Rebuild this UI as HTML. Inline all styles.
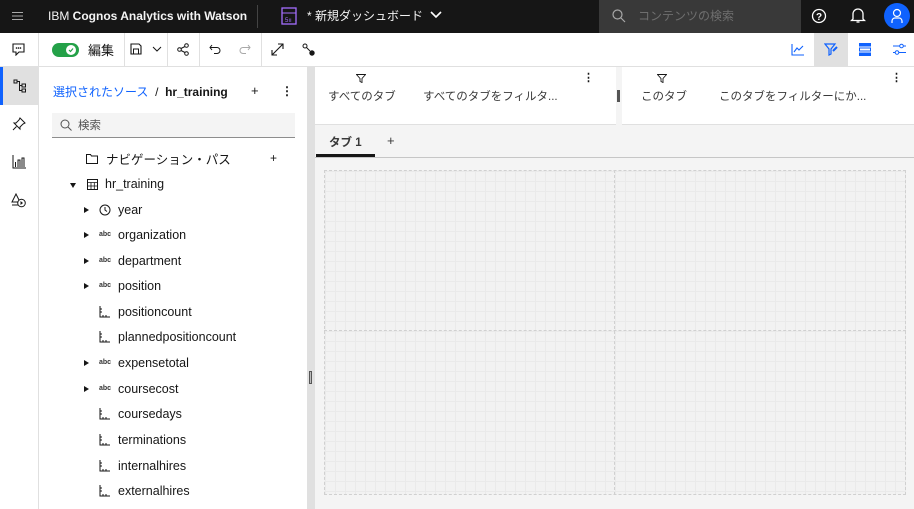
<!DOCTYPE html>
<html><head><meta charset="utf-8"><style>
*{box-sizing:border-box;margin:0;padding:0}
body{width:914px;height:509px;overflow:hidden;font-family:"Liberation Sans","Noto Sans CJK JP",sans-serif;background:#fff;position:relative;color:#161616}
.abs{position:absolute}
.top{left:0;top:0;width:914px;height:33px;background:#161616}
.tb{left:0;top:33px;width:914px;height:34px;background:#fff;border-bottom:1px solid #e0e0e0}
.sep{position:absolute;top:0;width:1px;height:33px;background:#e0e0e0}
.rail{left:0;top:67px;width:39px;height:442px;border-right:1px solid #e0e0e0;background:#fff}
.panel{left:39px;top:67px;width:268px;height:442px;background:#fff}
.split{left:307px;top:67px;width:8px;height:442px;background:#e0e0e0}
.main{left:315px;top:67px;width:599px;height:442px;background:#f4f4f4}
.item{position:absolute;font-size:12.5px;color:#161616}
.tri{position:absolute;width:0;height:0;border-top:3.5px solid transparent;border-bottom:3.5px solid transparent;border-left:5px solid #161616}
.abc{position:absolute;font-size:7px;font-weight:bold;color:#333}
</style></head><body>
<div class="abs top">
 <div class="abs" style="left:12px;top:12px;width:11px;height:1.3px;background:#aaa;box-shadow:0 3.5px 0 #aaa,0 7px 0 #aaa"></div>
 <div class="abs" style="left:48px;top:9px;color:#f4f4f4;font-size:12px">IBM <b>Cognos Analytics with Watson</b></div>
 <div class="abs" style="left:257px;top:5px;width:1px;height:23px;background:#444"></div>
 <svg class="abs" style="left:281px;top:7px" width="16" height="18"><rect x="1" y="1" width="14" height="16" fill="none" stroke="#a56eff" stroke-width="1.3"/><line x1="1" y1="6" x2="15" y2="6" stroke="#a56eff"/><text x="4" y="15" font-size="6" fill="#a56eff">5ıı</text></svg>
 <div class="abs" style="left:307px;top:7px;color:#f4f4f4;font-size:12px">* 新規ダッシュボード</div>
 <svg class="abs" style="left:430px;top:11px" width="12" height="8"><path d="M1 1l5 5 5-5" fill="none" stroke="#fff" stroke-width="1.6"/></svg>
 <div class="abs" style="left:599px;top:0;width:202px;height:33px;background:#393939"></div>
 <svg class="abs" style="left:612px;top:9px" width="14" height="14"><circle cx="5.5" cy="5.5" r="4.5" fill="none" stroke="#a8a8a8" stroke-width="1.2"/><path d="M9 9l4 4" stroke="#a8a8a8" stroke-width="1.2"/></svg>
 <div class="abs" style="left:638px;top:7px;color:#6f6f6f;font-size:12px">コンテンツの検索</div>
 <svg class="abs" style="left:811px;top:8px" width="16" height="16"><circle cx="8" cy="8" r="6.5" fill="none" stroke="#fff" stroke-width="1.3"/><text x="5" y="12" font-size="10" fill="#fff" font-weight="bold">?</text></svg>
 <svg class="abs" style="left:850px;top:7px" width="16" height="17"><path d="M3 12V7a5 5 0 0110 0v5l1.5 1.5h-13z" fill="none" stroke="#fff" stroke-width="1.3"/><path d="M6.5 15h3" stroke="#fff" stroke-width="1.3"/></svg>
 <div class="abs" style="left:884px;top:3px;width:26px;height:26px;border-radius:50%;background:#0f62fe"></div>
 <svg class="abs" style="left:890px;top:8px" width="14" height="16"><circle cx="7" cy="5" r="3.5" fill="none" stroke="#fff" stroke-width="1.2"/><path d="M2 15v-2a3 3 0 013-3h4a3 3 0 013 3v2" fill="none" stroke="#fff" stroke-width="1.2"/></svg>
</div>
<div class="abs tb">
 <div class="sep" style="left:38px"></div><div class="sep" style="left:124px"></div><div class="sep" style="left:167px"></div><div class="sep" style="left:199px"></div><div class="sep" style="left:261px"></div>
 <svg class="abs" style="left:12px;top:10px" width="14" height="13"><path d="M1 1h11v8H7l-3 3V9H1z" fill="none" stroke="#161616" stroke-width="1.1"/><circle cx="4.5" cy="5" r=".8"/><circle cx="6.5" cy="5" r=".8"/><circle cx="8.5" cy="5" r=".8"/></svg>
 <div class="abs" style="left:52px;top:10px;width:27px;height:14px;border-radius:7px;background:#24a148"></div>
 <div class="abs" style="left:66px;top:12px;width:10px;height:10px;border-radius:50%;background:#fff"></div>
 <svg class="abs" style="left:68px;top:14px" width="6" height="6"><path d="M1 3l1.5 1.5L5 1.5" fill="none" stroke="#24a148" stroke-width="1.2"/></svg>
 <div class="abs" style="left:88px;top:7px;font-size:13px">編集</div>
 <svg class="abs" style="left:130px;top:10px" width="12" height="12"><path d="M1 1h8l2 2v8H1z" fill="none" stroke="#161616" stroke-width="1.1"/><rect x="3.5" y="6" width="5" height="5" fill="none" stroke="#161616"/></svg>
 <svg class="abs" style="left:152px;top:13px" width="10" height="6"><path d="M1 1l4 4 4-4" fill="none" stroke="#161616"/></svg>
 <svg class="abs" style="left:177px;top:10px" width="12" height="13"><circle cx="2.5" cy="6.5" r="1.8" fill="none" stroke="#161616"/><circle cx="9.5" cy="2.5" r="1.8" fill="none" stroke="#161616"/><circle cx="9.5" cy="10.5" r="1.8" fill="none" stroke="#161616"/><path d="M4 5.5l4-2M4 7.5l4 2" stroke="#161616"/></svg>
 <svg class="abs" style="left:209px;top:11px" width="12" height="10"><path d="M3 1L1 3.5 3 6M1 3.5h7a3 3 0 010 6H5" fill="none" stroke="#161616"/></svg>
 <svg class="abs" style="left:239px;top:11px" width="12" height="10"><path d="M9 1l2 2.5L9 6M11 3.5H4a3 3 0 000 6h3" fill="none" stroke="#a8a8a8"/></svg>
 <svg class="abs" style="left:271px;top:10px" width="13" height="13"><path d="M1 12L12 1M7 1h5v5M1 7v5h5" fill="none" stroke="#161616" stroke-width="1.1"/></svg>
 <svg class="abs" style="left:302px;top:10px" width="13" height="13"><circle cx="3" cy="3" r="2" fill="none" stroke="#161616"/><circle cx="10" cy="10" r="2.7" fill="#161616"/><path d="M4.5 4.5l3.5 3.5" stroke="#161616"/></svg>
 <svg class="abs" style="left:791px;top:11px" width="13" height="12"><path d="M1 0v11h12M3 8l3-4 2 2 4-4" fill="none" stroke="#0f62fe" stroke-width="1.1"/></svg>
 <div class="abs" style="left:814px;top:0;width:34px;height:33px;background:#e0e0e0"></div>
 <svg class="abs" style="left:824px;top:10px" width="14" height="13"><path d="M1 1h10L7 6v5l-2 1V6z" fill="none" stroke="#0f62fe" stroke-width="1.2"/><path d="M9 8l4-4" stroke="#0f62fe" stroke-width="2"/></svg>
 <svg class="abs" style="left:859px;top:10px" width="12" height="13"><rect x="0" y="0" width="12" height="3.5" fill="#0f62fe"/><rect x="0.5" y="5" width="11" height="3" fill="none" stroke="#0f62fe"/><rect x="0" y="9.5" width="12" height="3.5" fill="#0f62fe"/></svg>
 <svg class="abs" style="left:893px;top:10px" width="13" height="13"><path d="M0 3h13M0 9.5h13" stroke="#0f62fe"/><circle cx="8.5" cy="3" r="1.8" fill="#fff" stroke="#0f62fe"/><circle cx="4" cy="9.5" r="1.8" fill="#fff" stroke="#0f62fe"/></svg>
</div>
<div class="abs rail">
 <div class="abs" style="left:0;top:0;width:38px;height:38px;background:#e0e0e0;border-left:3px solid #0f62fe"></div>
 <svg class="abs" style="left:13px;top:12px" width="14" height="14"><rect x="1" y="1" width="3" height="3" fill="none" stroke="#161616"/><rect x="9" y="5" width="3.5" height="3" fill="none" stroke="#161616"/><rect x="9" y="10" width="3.5" height="3" fill="none" stroke="#161616"/><path d="M4 2.5h2.5v9H9M6.5 6.5H9" fill="none" stroke="#161616"/></svg>
 <svg class="abs" style="left:12px;top:50px" width="14" height="14"><path d="M8 1l5 5-2 1-3 3 0 2-6-6 2 0 3-3z M4.5 9.5L1 13" fill="none" stroke="#161616"/></svg>
 <svg class="abs" style="left:12px;top:88px" width="14" height="14"><path d="M1 0v13h13M3.5 12V7M6 12V5h2v7M10 12V3h2v9" fill="none" stroke="#161616"/></svg>
 <svg class="abs" style="left:11px;top:126px" width="16" height="15"><path d="M5 1L1 9h8zM1 12h7" fill="none" stroke="#161616"/><circle cx="10.5" cy="10" r="3.8" fill="#fff" stroke="#161616"/><path d="M9.5 8l2.5 2-2.5 2z" fill="#161616"/></svg>
</div>
<div class="abs panel">
 <div class="abs" style="left:14px;top:16px;font-size:12px;color:#0f62fe">選択されたソース <span style="color:#161616">&nbsp;/&nbsp; <b>hr_training</b></span></div>
 <div class="abs" style="left:212px;top:16px;font-size:13px">+</div>
 <div class="abs" style="left:242px;top:17px;font-size:12px;font-weight:bold">⋮</div>
 <div class="abs" style="left:13px;top:46px;width:243px;height:25px;background:#f4f4f4;border-bottom:1px solid #8d8d8d"></div>
 <svg class="abs" style="left:21px;top:52px" width="12" height="12"><circle cx="5" cy="5" r="4" fill="none" stroke="#525252"/><path d="M8 8l3.5 3.5" stroke="#525252"/></svg>
 <div class="abs" style="left:39px;top:50px;font-size:11.5px;color:#525252">検索</div>
 <svg class="abs" style="left:47px;top:87px" width="12" height="10"><path d="M0.5 0.5h4l1 1.5h6v7.5H0.5z" fill="none" stroke="#161616"/></svg>
 <div class="item" style="left:67px;top:82px">ナビゲーション・パス</div>
 <div class="abs" style="left:231px;top:84px;font-size:12px">+</div>
 <div class="abs" style="left:31px;top:116px;width:0;height:0;border-left:3.5px solid transparent;border-right:3.5px solid transparent;border-top:5px solid #161616"></div>
 <svg class="abs" style="left:48px;top:112px" width="11" height="11"><rect x=".5" y=".5" width="10" height="10" fill="none" stroke="#161616"/><path d="M.5 3.5h10M.5 7h10M4 3.5v7M7.3 3.5v7" stroke="#161616" stroke-width=".8"/></svg>
 <div class="item" style="left:66px;top:110px">hr_training</div>
</div>
<div class="abs" style="left:39px;top:0;width:268px">
 <div class="tri" style="left:45px;top:207px"></div><svg class="abs" style="left:60px;top:204px" width="12" height="12"><circle cx="6" cy="6" r="5" fill="none" stroke="#161616"/><path d="M6 3v3l2 1.5" fill="none" stroke="#161616"/></svg><div class="item" style="left:79px;top:203px">year</div>
 <div class="tri" style="left:45px;top:232px"></div><div class="abc" style="left:60px;top:231px">abc</div><div class="item" style="left:79px;top:228px">organization</div>
 <div class="tri" style="left:45px;top:258px"></div><div class="abc" style="left:60px;top:257px">abc</div><div class="item" style="left:79px;top:254px">department</div>
 <div class="tri" style="left:45px;top:283px"></div><div class="abc" style="left:60px;top:282px">abc</div><div class="item" style="left:79px;top:279px">position</div>
 <svg class="abs" style="left:60px;top:306px" width="12" height="12"><path d="M1 0v11h10M4 11V9M7 11V9M1 3h2M1 6h2" fill="none" stroke="#161616"/></svg><div class="item" style="left:79px;top:305px">positioncount</div>
 <svg class="abs" style="left:60px;top:331px" width="12" height="12"><path d="M1 0v11h10M4 11V9M7 11V9M1 3h2M1 6h2" fill="none" stroke="#161616"/></svg><div class="item" style="left:79px;top:330px">plannedpositioncount</div>
 <div class="tri" style="left:45px;top:360px"></div><div class="abc" style="left:60px;top:359px">abc</div><div class="item" style="left:79px;top:356px">expensetotal</div>
 <div class="tri" style="left:45px;top:386px"></div><div class="abc" style="left:60px;top:385px">abc</div><div class="item" style="left:79px;top:382px">coursecost</div>
 <svg class="abs" style="left:60px;top:408px" width="12" height="12"><path d="M1 0v11h10M4 11V9M7 11V9M1 3h2M1 6h2" fill="none" stroke="#161616"/></svg><div class="item" style="left:79px;top:407px">coursedays</div>
 <svg class="abs" style="left:60px;top:434px" width="12" height="12"><path d="M1 0v11h10M4 11V9M7 11V9M1 3h2M1 6h2" fill="none" stroke="#161616"/></svg><div class="item" style="left:79px;top:433px">terminations</div>
 <svg class="abs" style="left:60px;top:460px" width="12" height="12"><path d="M1 0v11h10M4 11V9M7 11V9M1 3h2M1 6h2" fill="none" stroke="#161616"/></svg><div class="item" style="left:79px;top:459px">internalhires</div>
 <svg class="abs" style="left:60px;top:485px" width="12" height="12"><path d="M1 0v11h10M4 11V9M7 11V9M1 3h2M1 6h2" fill="none" stroke="#161616"/></svg><div class="item" style="left:79px;top:484px">externalhires</div>
</div>
<div class="abs split"><div class="abs" style="left:2px;top:304px;width:3px;height:13px;border:1px solid #555;background:#bbb"></div></div>
<div class="abs main">
 <div class="abs" style="left:0;top:0;width:301px;height:58px;background:#fff;border-bottom:1px solid #e0e0e0"></div>
 <div class="abs" style="left:307px;top:0;width:292px;height:58px;background:#fff;border-bottom:1px solid #e0e0e0"></div>
 <div class="abs" style="left:302px;top:23px;width:3px;height:12px;background:#555"></div>
 <svg class="abs" style="left:41px;top:7px" width="10" height="9"><path d="M.5.5h9L6 4.5v4l-2-1v-3z" fill="none" stroke="#161616" stroke-width=".9"/></svg>
 <div class="abs" style="left:13px;top:21px;font-size:11.5px;color:#393939">すべてのタブ</div>
 <div class="abs" style="left:108px;top:21px;font-size:11.5px;color:#393939">すべてのタブをフィルタ...</div>
 <div class="abs" style="left:268px;top:4px;font-size:11px;font-weight:bold">⋮</div>
 <svg class="abs" style="left:342px;top:7px" width="10" height="9"><path d="M.5.5h9L6 4.5v4l-2-1v-3z" fill="none" stroke="#161616" stroke-width=".9"/></svg>
 <div class="abs" style="left:326px;top:21px;font-size:11.5px;color:#393939">このタブ</div>
 <div class="abs" style="left:404px;top:21px;font-size:11.5px;color:#393939">このタブをフィルターにか...</div>
 <div class="abs" style="left:576px;top:4px;font-size:11px;font-weight:bold">⋮</div>
 <div class="abs" style="left:0;top:90px;width:599px;height:1px;background:#c6c6c6"></div>
 <div class="abs" style="left:14px;top:67px;font-size:11.5px;font-weight:bold;color:#393939">タブ 1</div>
 <div class="abs" style="left:1px;top:87px;width:59px;height:3px;background:#161616"></div>
 <div class="abs" style="left:72px;top:66px;font-size:13px;color:#393939">+</div>
 <div class="abs" style="left:9px;top:103px;width:582px;height:325px;border:1px dashed #d0d0d0;background-color:#f2f2f2;background-image:linear-gradient(#eaeaea 1px,transparent 1px),linear-gradient(90deg,#eaeaea 1px,transparent 1px);background-size:10px 10px"></div>
 <div class="abs" style="left:299px;top:103px;width:0;height:325px;border-left:1px dashed #d0d0d0"></div>
 <div class="abs" style="left:9px;top:263px;width:582px;height:0;border-top:1px dashed #d0d0d0"></div>
</div>
</body></html>
